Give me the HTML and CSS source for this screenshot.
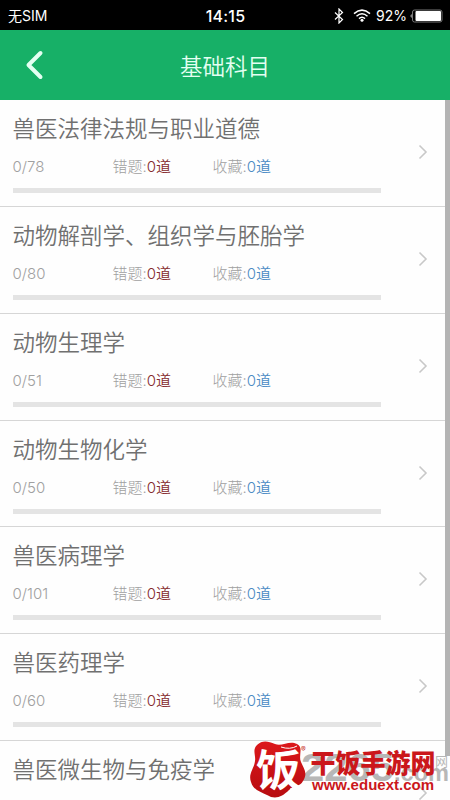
FILE: index.html
```html
<!DOCTYPE html>
<html lang="zh-CN">
<head>
<meta charset="utf-8">
<title>基础科目</title>
<link rel="stylesheet" href="styles.css">
</head>
<body>
<div class="screen">
  <header class="status">
    <span class="carrier">无SIM</span>
    <span class="time">14:15</span>
    <div class="indicators">
      <svg class="bluetooth" width="10" height="16" viewBox="0 0 10 16"><path d="M1 4.5 8.5 11.5 5 15V1L8.5 4.5 1 11.5"/></svg>
      <svg class="wifi" width="18" height="13" viewBox="0 0 18 13"><path d="M1 4.6Q9-2.4 17 4.6M3.5 7.2Q9 2.4 14.5 7.2M6 9.6Q9 7 12 9.6"/><circle cx="9" cy="11.3" r="1.5"/></svg>
      <span class="percent">92%</span>
      <svg class="battery" width="33" height="14" viewBox="0 0 33 14"><path class="cap" d="M1.5 5Q-.2 7 1.5 9z"/><rect class="shell" x="2.5" y="1" width="29.5" height="12" rx="2"/><rect class="charge" x="5.5" y="2" width="25.5" height="10" rx="1"/></svg>
    </div>
  </header>
  <nav class="navbar">
    <svg class="back" width="20" height="30" viewBox="0 0 20 30"><path d="M16.5 3 4.5 15 16.5 27"/></svg>
    <h1>基础科目</h1>
  </nav>
  <main class="list">
    <section class="row"><h2>兽医法律法规与职业道德</h2><div class="stats"><span>0/78</span><span>错题:<b class="wrong">0道</b></span><span>收藏:<b class="saved">0道</b></span></div><div class="bar"></div><svg class="chevron" width="10" height="16" viewBox="0 0 10 16"><path d="M1.5 1.5 8 8 1.5 14.5"/></svg></section>
    <section class="row"><h2>动物解剖学、组织学与胚胎学</h2><div class="stats"><span>0/80</span><span>错题:<b class="wrong">0道</b></span><span>收藏:<b class="saved">0道</b></span></div><div class="bar"></div><svg class="chevron" width="10" height="16" viewBox="0 0 10 16"><path d="M1.5 1.5 8 8 1.5 14.5"/></svg></section>
    <section class="row"><h2>动物生理学</h2><div class="stats"><span>0/51</span><span>错题:<b class="wrong">0道</b></span><span>收藏:<b class="saved">0道</b></span></div><div class="bar"></div><svg class="chevron" width="10" height="16" viewBox="0 0 10 16"><path d="M1.5 1.5 8 8 1.5 14.5"/></svg></section>
    <section class="row"><h2>动物生物化学</h2><div class="stats"><span>0/50</span><span>错题:<b class="wrong">0道</b></span><span>收藏:<b class="saved">0道</b></span></div><div class="bar"></div><svg class="chevron" width="10" height="16" viewBox="0 0 10 16"><path d="M1.5 1.5 8 8 1.5 14.5"/></svg></section>
    <section class="row"><h2>兽医病理学</h2><div class="stats"><span>0/101</span><span>错题:<b class="wrong">0道</b></span><span>收藏:<b class="saved">0道</b></span></div><div class="bar"></div><svg class="chevron" width="10" height="16" viewBox="0 0 10 16"><path d="M1.5 1.5 8 8 1.5 14.5"/></svg></section>
    <section class="row"><h2>兽医药理学</h2><div class="stats"><span>0/60</span><span>错题:<b class="wrong">0道</b></span><span>收藏:<b class="saved">0道</b></span></div><div class="bar"></div><svg class="chevron" width="10" height="16" viewBox="0 0 10 16"><path d="M1.5 1.5 8 8 1.5 14.5"/></svg></section>
    <section class="row last"><h2>兽医微生物与免疫学</h2><svg class="chevron" width="10" height="16" viewBox="0 0 10 16"><path d="M1.5 1.5 8 8 1.5 14.5"/></svg></section>
  </main>
  <div class="scrollbar"></div>
  <svg class="watermark" width="210" height="64" viewBox="240 736 210 64">
    <defs><linearGradient id="seal" x1="0" y1="0" x2="0" y2="1"><stop offset="0" stop-color="#dc181b"/><stop offset="1" stop-color="#b70c10"/></linearGradient></defs>
    <text class="ghost" x="301" y="781" font-size="38" textLength="93" lengthAdjust="spacingAndGlyphs">2265</text>
    <text class="ghost" x="394" y="781" font-size="24" textLength="55" lengthAdjust="spacingAndGlyphs">.com</text>
    <text class="ghost small" x="435" y="766" font-size="13">网</text>
    <path class="seal" d="M257 745C262 740 268 741 275 744C282 747 289 740 297 744C304 748 298 755 301 762C304 769 308 773 303 781C300 787 294 785 289 790C282 797 275 800 267 795C261 792 253 790 251 782C248 774 254 769 255 761C256 755 252 750 257 745Z"/>
    <path class="ribbon" d="M281 747Q290 750 297 746M290 789Q299 787 305 784L299 788Q295 791 289 791"/>
    <text class="sealtext" x="256" y="786" font-size="43" textLength="45" lengthAdjust="spacingAndGlyphs">饭</text>
    <text class="reg" x="301" y="752" font-size="7">®</text>
    <text class="brand" x="310.500" y="773" font-size="26" textLength="125" lengthAdjust="spacingAndGlyphs">干饭手游网</text>
    <text class="url" x="312" y="789.500" font-size="14" textLength="122" lengthAdjust="spacingAndGlyphs">www.eduext.com</text>
  </svg>
</div>
</body>
</html>
```
FILE: styles.css
```css
* { box-sizing: border-box; }
body { margin: 0; background: #fff; font-family: Inter, "Noto Sans CJK SC", sans-serif; }
.screen { position: relative; width: 450px; height: 800px; overflow: hidden; background: #fefefe; }
.status { display: grid; grid-template-columns: 1fr auto 1fr; align-items: center; height: 30px; padding: 1px 7px 0 8px; background: #000; color: #fff; font-size: 14px; line-height: 20px; }
.time { font-size: 16px; font-weight: 500; letter-spacing: .2px; }
.indicators { display: flex; justify-content: flex-end; align-items: center; }
.bluetooth { margin-right: 9px; }
.bluetooth path { fill: none; stroke: #fff; stroke-width: 1.2; }
.wifi { margin-right: 5px; }
.wifi path { fill: none; stroke: #fff; stroke-width: 1.5; }
.wifi circle, .cap, .charge { fill: #fff; }
.percent { margin-right: 3px; }
.shell { fill: none; stroke: #777; }
.navbar { display: grid; grid-template-columns: 1fr auto 1fr; align-items: center; height: 70px; background: #17b067; color: #e4fff2; }
.back { margin-left: 24px; }
.back path { fill: none; stroke: #e4fff2; stroke-width: 4; stroke-linecap: round; stroke-linejoin: round; }
h1 { margin: 4px 0 0; font-size: 22.5px; line-height: 32px; font-weight: 350; }
.row { position: relative; height: 106.85px; padding: 12px 69px 0 12.5px; border-bottom: 1px solid #d6d6d6; }
.last { border: 0; }
h2 { margin: 0; font-size: 22.5px; line-height: 33px; font-weight: 350; color: #707070; white-space: nowrap; }
.stats { display: grid; grid-template-columns: 100px 100px 1fr; margin-top: 11px; font-size: 15px; line-height: 22px; font-weight: 300; color: #a0a0a0; }
b { font-weight: 350; }
.wrong { color: #852a2d; }
.saved { color: #4b8bc4; }
.bar { height: 5px; margin-top: 10px; background: #e4e4e4; }
.chevron { position: absolute; left: 418px; top: 44px; }
.chevron path { fill: none; stroke: #c8c8c8; stroke-width: 1.6; }
.scrollbar { position: absolute; right: 0; top: 100px; width: 5px; height: 656px; background: #b4b4b4; }
.watermark { position: absolute; left: 240px; top: 736px; }
.ghost { fill: #b7b7b7; font-family: "Liberation Sans", sans-serif; font-weight: 700; }
.small { font-family: "Noto Sans CJK SC", sans-serif; font-weight: 400; }
.seal { fill: url(#seal); }
.ribbon { fill: none; stroke: #fff; stroke-width: 1; }
.sealtext { fill: #fff; font-family: "Noto Sans CJK SC", sans-serif; font-weight: 700; }
.reg { fill: #c52a2a; }
.brand { fill: #cb171b; font-family: "Noto Sans CJK SC", sans-serif; font-weight: 900; }
.url { fill: #cb171b; font-family: "Liberation Sans", sans-serif; font-weight: 700; }
```
